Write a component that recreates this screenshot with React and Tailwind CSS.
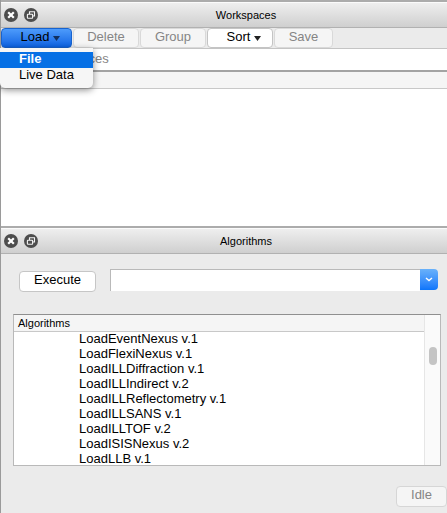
import React from "react";

function CloseIcon() {
  return (
    <svg viewBox="0 0 14 14" className="size-[14px]" aria-hidden="true">
      <circle cx="7" cy="7" r="7" fill="#4d4d4d" />
      <path d="M4.2 4.2 9.8 9.8M9.8 4.2 4.2 9.8" stroke="#fff" strokeWidth="2.2" />
    </svg>
  );
}

function FloatIcon() {
  return (
    <svg viewBox="0 0 14 14" className="size-[14px]" aria-hidden="true">
      <circle cx="7" cy="7" r="7" fill="#4d4d4d" />
      <path d="M5.5 6V3.8h5V8H8.8" fill="none" stroke="#f4f4f4" strokeWidth="1.1" />
      <rect x="3.4" y="6.2" width="5.2" height="4" rx="0.5" fill="none" stroke="#f4f4f4" strokeWidth="1.1" />
    </svg>
  );
}

function Arrow({ className }) {
  return (
    <svg viewBox="0 0 7 5" className={"h-[5px] w-[7px] " + className} aria-hidden="true">
      <path d="M0 0h7L3.5 5z" fill="currentColor" />
    </svg>
  );
}

function TitleBar({ title }) {
  return (
    <header className="flex h-[28px] items-center gap-[6px] border-t-2 border-b border-t-[#acacac] border-b-[#b1b1b1] bg-linear-to-b from-[#f0f0f0] to-[#cfcfcf] pl-[3px] shadow-[inset_0_1px_0_#fbfbfb]">
      <button type="button" aria-label={"Close " + title}><CloseIcon /></button>
      <button type="button" aria-label={"Float " + title}><FloatIcon /></button>
      <h2 className="grow pr-[6px] pl-[7px] text-center text-[11px] leading-[14px]">{title}</h2>
    </header>
  );
}

const toolButton =
  "flex h-[20px] items-center justify-center rounded-[4px] border text-[13px] leading-[16px] pb-[2px] ";
const disabledButton = "border-[#d9d9d9] bg-[#f5f5f5] text-[#858585] ";

const algorithms = [
  "LoadEventNexus v.1",
  "LoadFlexiNexus v.1",
  "LoadILLDiffraction v.1",
  "LoadILLIndirect v.2",
  "LoadILLReflectometry v.1",
  "LoadILLSANS v.1",
  "LoadILLTOF v.2",
  "LoadISISNexus v.2",
  "LoadLLB v.1",
];

function Workspaces() {
  return (
    <section>
      <TitleBar title="Workspaces" />
      <div className="relative flex gap-px">
        <button
          type="button"
          aria-expanded="true"
          className={toolButton + "w-[71px] gap-1 border-[#1763cf] bg-linear-to-b from-[#4d9bfb] to-[#0b62e2] pl-[8px] text-black"}
        >
          Load
          <Arrow className="mt-[3px] text-[#12305f]" />
        </button>
        <button type="button" disabled className={toolButton + disabledButton + "w-[66px]"}>Delete</button>
        <button type="button" disabled className={toolButton + disabledButton + "w-[66px]"}>Group</button>
        <button type="button" className={toolButton + "w-[66px] gap-1 border-[#c4c4c4] bg-white pl-[8px] text-black"}>
          Sort
          <Arrow className="mt-[3px] text-[#222222]" />
        </button>
        <button type="button" disabled className={toolButton + disabledButton + "w-[59px]"}>Save</button>
        <div
          role="menu"
          className="absolute top-[20px] -left-px z-10 w-[93px] rounded-b-[5px] bg-[#f6f6f6] pt-[4px] pb-[4px] text-[13px] leading-[13px] shadow-[0_2px_7px_rgba(0,0,0,0.45)]"
        >
          <button type="button" role="menuitem" className="block h-[16px] w-full bg-[#0670e5] pb-[3px] pl-[19px] text-left font-bold text-white">File</button>
          <button type="button" role="menuitem" className="block h-[16px] w-full pb-[3px] pl-[19px] text-left">Live Data</button>
        </div>
      </div>
      <input
        type="text"
        aria-label="Filter Workspaces"
        placeholder="Filter Workspaces"
        className="block h-[24px] w-full border-t border-b-2 border-t-[#c4c4c4] border-b-[#a3a3a3] bg-white px-[4px] pb-[2px] text-[13px] leading-[16px] outline-none placeholder:text-[#858585]"
      />
      <div className="h-[17px] border-b border-[#c8c8c8] bg-[#f5f5f5]" />
      <div className="h-[137px] bg-white" />
    </section>
  );
}

function Algorithms() {
  return (
    <section className="flex grow flex-col">
      <TitleBar title="Algorithms" />
      <div className="mt-[15px] mr-[9px] ml-[18px] flex items-start gap-[14px]">
        <button type="button" className="mt-[2px] h-[21px] w-[77px] rounded-[4px] border border-[#c6c6c6] bg-white pb-[3px] text-[13px] leading-[16px]">
          Execute
        </button>
        <div className="flex min-w-0 grow">
          <input
            type="text"
            aria-label="Algorithm name"
            className="h-[22px] min-w-0 grow border-t border-l border-[#b9b9b9] bg-white px-1 text-[13px] outline-none"
          />
          <button
            type="button"
            aria-label="Show algorithms"
            className="flex h-[21px] w-[18px] items-center justify-center rounded-r-[4px] bg-linear-to-b from-[#69b1fa] to-[#0a75fb]"
          >
            <svg viewBox="0 0 8 5" className="h-[5px] w-[8px]" aria-hidden="true">
              <path d="M1 1l3 2.6L7 1" fill="none" stroke="#fff" strokeWidth="1.4" />
            </svg>
          </button>
        </div>
      </div>
      <div className="mt-[22px] mr-[6px] ml-[12px] flex border border-[#b9b9b9] border-t-[#8f8f8f] bg-white">
        <div className="min-w-0 grow">
          <h3 className="h-[17px] border-b border-[#c8c8c8] bg-[#f5f5f5] pl-[4px] text-[11px] leading-[17px]">Algorithms</h3>
          <ul className="flex flex-col gap-[2px] pl-[65px] text-[13px] leading-[13px]">
            {algorithms.map((name) => (
              <li key={name}>{name}</li>
            ))}
          </ul>
        </div>
        <div className="flex w-[16px] justify-center border-l border-[#e6e6e6] bg-[#fafafa] pt-[32px]">
          <div className="h-[18px] w-[8px] rounded-full bg-[#c4c4c4]" />
        </div>
      </div>
      <div className="mt-[20px] mb-[6px] flex justify-end">
        <button type="button" disabled className="h-[21px] w-[51px] rounded-[4px] border border-[#d6d6d6] bg-[#f5f5f5] pb-[3px] text-[13px] leading-[16px] text-[#858585]">
          Idle
        </button>
      </div>
    </section>
  );
}

export default function App() {
  return (
    <main className="flex min-h-screen flex-col border-l border-[#9a9a9a] bg-[#ebebeb] font-['Liberation_Sans',Arial,sans-serif] text-black">
      <Workspaces />
      <Algorithms />
    </main>
  );
}
